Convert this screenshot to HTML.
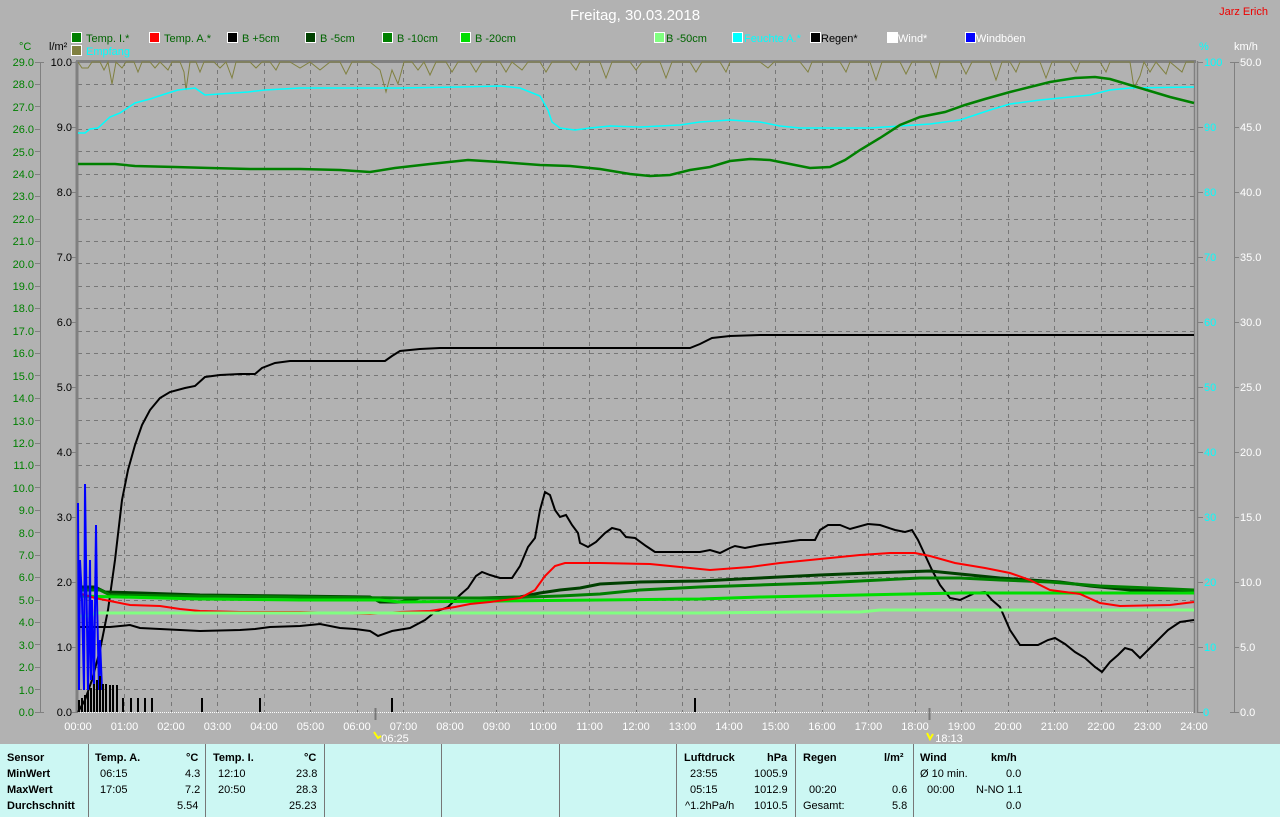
<!DOCTYPE html>
<html><head><meta charset="utf-8"><style>
body{margin:0;width:1280px;height:817px;overflow:hidden;background:#b2b2b2;font-family:"Liberation Sans",sans-serif}
svg{position:absolute;left:0;top:0}
.tbl{position:absolute;left:0;top:744px;width:1280px;height:73px;background:#ccf7f3;font-size:11px;color:#000}
.col{position:absolute;top:0;height:73px;border-right:1px solid #777}
.r{position:absolute;white-space:nowrap}
.b{font-weight:bold}
</style></head><body>
<svg width="1280" height="744" viewBox="0 0 1280 744" font-family="Liberation Sans, sans-serif">
<rect x="0" y="0" width="1280" height="744" fill="#b2b2b2"/>
<text x="635" y="20" fill="#fff" font-size="15" text-anchor="middle">Freitag, 30.03.2018</text>
<text x="1268" y="15" fill="#e00" font-size="11" text-anchor="end">Jarz Erich</text>
<!-- legend -->
<g font-size="11">
<rect x="71.5" y="32.5" width="10" height="10" fill="#008000" stroke="#fff"/><text x="86" y="42" fill="#006400">Temp. I.*</text>
<rect x="149.5" y="32.5" width="10" height="10" fill="#f00" stroke="#fff"/><text x="164" y="42" fill="#006400">Temp. A.*</text>
<rect x="227.5" y="32.5" width="10" height="10" fill="#000" stroke="#fff"/><text x="242" y="42" fill="#006400">B +5cm</text>
<rect x="305.5" y="32.5" width="10" height="10" fill="#004000" stroke="#fff"/><text x="320" y="42" fill="#006400">B -5cm</text>
<rect x="382.5" y="32.5" width="10" height="10" fill="#008000" stroke="#fff"/><text x="397" y="42" fill="#006400">B -10cm</text>
<rect x="460.5" y="32.5" width="10" height="10" fill="#00dd00" stroke="#fff"/><text x="475" y="42" fill="#006400">B -20cm</text>
<rect x="654.5" y="32.5" width="10" height="10" fill="#80ff80" stroke="#fff"/><text x="666" y="42" fill="#006400">B -50cm</text>
<rect x="732.5" y="32.5" width="10" height="10" fill="#00ffff" stroke="#fff"/><text x="744" y="42" fill="#00ffff">Feuchte A.*</text>
<rect x="810.5" y="32.5" width="10" height="10" fill="#000" stroke="#fff"/><text x="821" y="42" fill="#000">Regen*</text>
<rect x="887.5" y="32.5" width="10" height="10" fill="#fff" stroke="#fff"/><text x="898" y="42" fill="#fff">Wind*</text>
<rect x="965.5" y="32.5" width="10" height="10" fill="#00f" stroke="#fff"/><text x="976" y="42" fill="#fff">Windböen</text>
<rect x="71.5" y="45.5" width="10" height="10" fill="#808040" stroke="#fff"/><text x="86" y="55" fill="#00ffff">Empfang</text>
</g>
<text x="19" y="50" fill="#008000" font-size="11">°C</text>
<text x="49" y="50" fill="#000" font-size="11">l/m²</text>
<text x="1199" y="50" fill="#00ffff" font-size="11">%</text>
<text x="1234" y="50" fill="#fff" font-size="11">km/h</text>
<!-- grid -->
<g stroke="#777" stroke-dasharray="4,4" stroke-width="1">
<path d="M78 84.5H1194M78 106.5H1194M78 129.5H1194M78 151.5H1194M78 174.5H1194M78 196.5H1194M78 219.5H1194M78 241.5H1194M78 263.5H1194M78 286.5H1194M78 308.5H1194M78 331.5H1194M78 353.5H1194M78 375.5H1194M78 398.5H1194M78 420.5H1194M78 443.5H1194M78 465.5H1194M78 487.5H1194M78 510.5H1194M78 532.5H1194M78 555.5H1194M78 577.5H1194M78 600.5H1194M78 622.5H1194M78 644.5H1194M78 667.5H1194M78 689.5H1194"/>
<path d="M124.5 62V712M171.5 62V712M217.5 62V712M264.5 62V712M310.5 62V712M357.5 62V712M403.5 62V712M450.5 62V712M496.5 62V712M543.5 62V712M589.5 62V712M636.5 62V712M682.5 62V712M729.5 62V712M775.5 62V712M822.5 62V712M868.5 62V712M915.5 62V712M961.5 62V712M1008.5 62V712M1054.5 62V712M1101.5 62V712M1147.5 62V712"/>
</g>
<!-- axes -->
<path d="M77 61V713" stroke="#808080" stroke-width="3"/>
<path d="M76 61.5H1196" stroke="#808080" stroke-width="3"/>
<path d="M1194.5 61V713M1197.5 61V713" stroke="#808080" stroke-width="1.5"/>
<path d="M78 712.5H1194" stroke="#fff" stroke-dasharray="1,1"/>
<path d="M40.5 62V712M1234.5 62V712" stroke="#808080"/>
<g stroke="#808080"><path d="M35 62.5h9M35 84.5h5M35 106.5h5M35 129.5h5M35 151.5h5M35 174.5h5M35 196.5h5M35 219.5h5M35 241.5h5M35 263.5h5M35 286.5h5M35 308.5h5M35 331.5h5M35 353.5h5M35 375.5h5M35 398.5h5M35 420.5h5M35 443.5h5M35 465.5h5M35 487.5h5M35 510.5h5M35 532.5h5M35 555.5h5M35 577.5h5M35 600.5h5M35 622.5h5M35 644.5h5M35 667.5h5M35 689.5h5M35 712.5h9"/>
<path d="M72 62.5h5M72 127.5h5M72 192.5h5M72 257.5h5M72 322.5h5M72 387.5h5M72 452.5h5M72 517.5h5M72 582.5h5M72 647.5h5M72 712.5h5"/>
<path d="M1198 62.5h5M1198 127.5h5M1198 192.5h5M1198 257.5h5M1198 322.5h5M1198 387.5h5M1198 452.5h5M1198 517.5h5M1198 582.5h5M1198 647.5h5M1198 712.5h5"/>
<path d="M1230 62.5h9M1234 127.5h5M1234 192.5h5M1234 257.5h5M1234 322.5h5M1234 387.5h5M1234 452.5h5M1234 517.5h5M1234 582.5h5M1234 647.5h5M1230 712.5h9"/></g>
<g fill="#008000" font-size="11" text-anchor="end">
<text x="34" y="66">29.0</text><text x="34" y="88">28.0</text><text x="34" y="111">27.0</text><text x="34" y="133">26.0</text><text x="34" y="156">25.0</text><text x="34" y="178">24.0</text><text x="34" y="200">23.0</text><text x="34" y="223">22.0</text><text x="34" y="245">21.0</text><text x="34" y="268">20.0</text><text x="34" y="290">19.0</text><text x="34" y="312">18.0</text><text x="34" y="335">17.0</text><text x="34" y="357">16.0</text><text x="34" y="380">15.0</text><text x="34" y="402">14.0</text><text x="34" y="425">13.0</text><text x="34" y="447">12.0</text><text x="34" y="469">11.0</text><text x="34" y="492">10.0</text><text x="34" y="514">9.0</text><text x="34" y="537">8.0</text><text x="34" y="559">7.0</text><text x="34" y="581">6.0</text><text x="34" y="604">5.0</text><text x="34" y="626">4.0</text><text x="34" y="649">3.0</text><text x="34" y="671">2.0</text><text x="34" y="694">1.0</text><text x="34" y="716">0.0</text>
</g>
<g fill="#000" font-size="11" text-anchor="end">
<text x="72" y="66">10.0</text><text x="72" y="131">9.0</text><text x="72" y="196">8.0</text><text x="72" y="261">7.0</text><text x="72" y="326">6.0</text><text x="72" y="391">5.0</text><text x="72" y="456">4.0</text><text x="72" y="521">3.0</text><text x="72" y="586">2.0</text><text x="72" y="651">1.0</text><text x="72" y="716">0.0</text>
</g>
<g fill="#00ffff" font-size="11">
<text x="1204" y="66">100</text><text x="1204" y="131">90</text><text x="1204" y="196">80</text><text x="1204" y="261">70</text><text x="1204" y="326">60</text><text x="1204" y="391">50</text><text x="1204" y="456">40</text><text x="1204" y="521">30</text><text x="1204" y="586">20</text><text x="1204" y="651">10</text><text x="1203" y="716">0</text>
</g>
<g fill="#fff" font-size="11">
<text x="1240" y="66">50.0</text><text x="1240" y="131">45.0</text><text x="1240" y="196">40.0</text><text x="1240" y="261">35.0</text><text x="1240" y="326">30.0</text><text x="1240" y="391">25.0</text><text x="1240" y="456">20.0</text><text x="1240" y="521">15.0</text><text x="1240" y="586">10.0</text><text x="1240" y="651">5.0</text><text x="1240" y="716">0.0</text>
</g>
<g fill="#fff" font-size="11" text-anchor="middle">
<text x="78" y="730">00:00</text><text x="124.5" y="730">01:00</text><text x="171" y="730">02:00</text><text x="217.5" y="730">03:00</text><text x="264" y="730">04:00</text><text x="310.5" y="730">05:00</text><text x="357" y="730">06:00</text><text x="403.5" y="730">07:00</text><text x="450" y="730">08:00</text><text x="496.5" y="730">09:00</text><text x="543" y="730">10:00</text><text x="589.5" y="730">11:00</text><text x="636" y="730">12:00</text><text x="682.5" y="730">13:00</text><text x="729" y="730">14:00</text><text x="775.5" y="730">15:00</text><text x="822" y="730">16:00</text><text x="868.5" y="730">17:00</text><text x="915" y="730">18:00</text><text x="961.5" y="730">19:00</text><text x="1008" y="730">20:00</text><text x="1054.5" y="730">21:00</text><text x="1101" y="730">22:00</text><text x="1147.5" y="730">23:00</text><text x="1194" y="730">24:00</text>
<text x="395" y="742">06:25</text><text x="949" y="742">18:13</text>
</g>
<path d="M374 732l4 6 3-2" stroke="#ff0" stroke-width="2" fill="none"/>
<path d="M927 733l3 6 3-5" stroke="#ff0" stroke-width="2" fill="none"/>
<path d="M375.5 708V720M929.5 708V720" stroke="#777" stroke-width="2"/>
<!-- empfang -->
<polyline fill="none" stroke="#808040" stroke-width="1" points="78,62 82,68 88,68 92,62 100,62 104,70 108,62 112,84 116,62 122,68 126,62 134,62 138,72 142,62 150,62 155,68 160,62 168,70 172,62 180,62 184,72 186,90 190,62 196,62 200,72 204,62 214,62 220,68 226,62 232,78 236,62 250,62 256,68 262,62 270,62 276,70 280,62 290,62 300,68 310,62 320,70 330,62 340,62 346,74 352,62 370,62 380,70 386,92 392,70 398,84 404,62 412,62 418,70 424,62 430,75 436,62 446,62 452,72 458,62 470,62 476,72 482,62 500,62 506,72 512,62 522,70 528,62 540,62 546,72 552,62 570,62 576,70 580,62 600,62 606,78 612,62 630,62 636,70 642,62 660,62 666,78 672,62 690,62 696,72 702,62 720,62 726,72 730,62 760,62 768,68 774,62 800,62 808,72 812,62 840,62 846,72 850,62 870,62 876,80 882,62 900,62 906,74 912,62 930,62 936,78 940,62 960,62 966,74 972,62 990,62 996,80 1002,62 1010,62 1016,72 1020,62 1040,62 1046,78 1052,62 1070,62 1076,72 1080,62 1100,62 1106,72 1110,62 1130,62 1134,88 1140,76 1144,62 1150,72 1156,62 1166,74 1170,62 1182,72 1186,62 1194,62"/>
<!-- humidity -->
<polyline fill="none" stroke="#00ffff" stroke-width="1.5" points="78,133 85,133 90,129 98,128 110,117 120,113 135,103 150,99 165,94 178,90 195,88 205,95 248,92 265,90 300,88 350,88 400,88 460,87 500,86 520,88 540,96 548,110 552,122 560,128 575,130 590,128 610,126 640,127 660,126 680,125 700,122 730,120 760,122 780,126 800,128 840,128 870,128 900,126 930,124 960,120 990,110 1010,104 1040,100 1070,97 1090,95 1110,90 1130,88 1194,87"/>
<!-- temp I -->
<polyline fill="none" stroke="#008000" stroke-width="2.5" points="78,164 115,164 135,166 175,167 210,168 250,169 300,169 340,170 370,172 395,168 430,164 468,160 500,162 540,165 570,166 600,169 630,174 650,176 670,175 690,170 710,167 730,161 750,159 770,160 790,164 810,168 830,167 845,160 860,150 880,138 900,125 920,117 945,112 965,105 985,99 1010,92 1030,87 1050,82 1075,78 1095,77 1110,79 1130,85 1150,91 1170,97 1194,103"/>
<!-- B +5 black rising -->
<polyline fill="none" stroke="#000" stroke-width="2" points="78,712 85,700 92,680 100,650 108,610 115,560 122,500 128,470 135,445 142,425 150,410 160,398 170,392 185,388 195,386 205,377 220,375 240,374 255,374 262,368 275,363 290,361 330,361 385,361 392,356 400,351 420,349 440,348 480,348 560,348 640,348 690,348 700,344 712,338 730,336 760,335 900,335 1194,335"/>
<!-- black temp-like -->
<polyline fill="none" stroke="#000" stroke-width="2" points="78,627 110,627 130,625 140,628 160,629 200,631 240,630 255,629 270,627 300,626 320,624 340,628 355,629 370,631 378,636 392,631 410,628 425,620 435,612 448,607 460,595 468,588 476,576 482,572 490,575 500,578 512,578 520,566 528,547 535,538 540,510 545,492 550,495 555,510 560,517 566,515 572,525 578,533 580,543 588,547 596,542 605,533 612,528 620,530 626,537 635,538 646,546 655,552 700,552 710,550 720,553 730,548 735,546 745,548 760,545 785,542 800,540 815,540 820,530 828,525 840,525 850,529 868,524 880,525 895,530 905,532 912,530 918,540 925,555 932,570 940,585 950,598 960,600 975,593 985,592 992,600 1000,607 1010,630 1020,645 1038,645 1048,640 1055,638 1065,644 1075,652 1085,658 1095,667 1102,672 1110,662 1118,655 1125,648 1132,650 1140,658 1148,650 1158,640 1168,630 1180,622 1194,620"/>
<!-- B -5 dark green -->
<polyline fill="none" stroke="#004000" stroke-width="3" points="78,587 95,587 105,592 140,593 200,595 290,596 370,597 380,602 400,602 420,598 480,598 520,597 540,593 560,590 580,588 600,584 640,582 700,581 760,578 820,575 870,573 930,571 960,574 1000,578 1030,580 1060,582 1090,586 1130,590 1194,592"/>
<!-- B -10 green -->
<polyline fill="none" stroke="#008000" stroke-width="3" points="78,590 100,590 110,595 180,596 300,597 400,598 500,598 560,596 600,594 640,590 700,587 760,585 820,583 880,580 920,578 960,578 1000,580 1050,582 1100,586 1150,588 1194,590"/>
<!-- B -20 bright -->
<polyline fill="none" stroke="#00dd00" stroke-width="3" points="78,596 120,597 200,599 300,600 380,600 400,602 500,601 600,600 700,599 760,597 860,595 960,593 1100,593 1194,593"/>
<!-- red temp A -->
<polyline fill="none" stroke="#f00" stroke-width="2" points="78,593 95,598 115,602 130,605 160,606 180,609 200,611 240,612 300,612 370,614 400,612 430,611 455,607 470,604 490,602 520,598 535,590 545,576 555,566 565,563 600,563 650,564 690,568 710,570 750,567 780,563 820,559 860,555 890,553 915,553 930,556 955,563 985,568 1010,573 1030,580 1050,590 1080,594 1100,603 1120,606 1170,605 1194,602"/>
<!-- B -50 light -->
<polyline fill="none" stroke="#80ff80" stroke-width="3" points="78,616 90,616 96,613 200,613 400,613 500,613 600,613 700,613 800,612 860,612 880,610 1000,610 1194,610"/>
<!-- windböen -->
<polyline fill="none" stroke="#00f" stroke-width="2" points="78,503 79,690 80,560 82,600 84,690 85,484 86,560 88,690 89,640 90,560 91,680 92,600 94,690 96,525 97,600 99,690 100,640 102,690"/>
<!-- rain bars -->
<g fill="#000">
<rect x="78" y="700" width="2" height="12"/><rect x="81" y="698" width="2" height="14"/><rect x="84" y="695" width="2" height="17"/><rect x="87" y="692" width="2" height="20"/><rect x="90" y="688" width="2" height="24"/><rect x="93" y="684" width="2" height="28"/><rect x="96" y="680" width="2" height="32"/><rect x="99" y="676" width="2" height="36"/><rect x="102" y="684" width="2" height="28"/><rect x="105" y="684" width="2" height="28"/><rect x="109" y="685" width="2" height="27"/><rect x="112" y="685" width="2" height="27"/><rect x="116" y="685" width="2" height="27"/><rect x="122" y="698" width="2" height="14"/><rect x="130" y="698" width="2" height="14"/><rect x="137" y="698" width="2" height="14"/><rect x="144" y="698" width="2" height="14"/><rect x="151" y="698" width="2" height="14"/><rect x="201" y="698" width="2" height="14"/><rect x="259" y="698" width="2" height="14"/><rect x="391" y="698" width="2" height="14"/><rect x="694" y="698" width="2" height="14"/>
</g>
</svg>
<div class="tbl">
<div class="col" style="left:0;width:88px"></div>
<div class="col" style="left:88px;width:117px"></div>
<div class="col" style="left:205px;width:119px"></div>
<div class="col" style="left:324px;width:117px"></div>
<div class="col" style="left:441px;width:118px"></div>
<div class="col" style="left:559px;width:117px"></div>
<div class="col" style="left:676px;width:119px"></div>
<div class="col" style="left:795px;width:118px"></div>
<div class="r b" style="left:7px;top:8px">Sensor</div>
<div class="r b" style="left:7px;top:24px">MinWert</div>
<div class="r b" style="left:7px;top:40px">MaxWert</div>
<div class="r b" style="left:7px;top:56px">Durchschnitt</div>
<div class="r b" style="left:95px;top:8px">Temp. A.</div><div class="r b" style="left:186px;top:8px">°C</div>
<div class="r" style="left:100px;top:24px">06:15</div><div class="r" style="left:185px;top:24px">4.3</div>
<div class="r" style="left:100px;top:40px">17:05</div><div class="r" style="left:185px;top:40px">7.2</div>
<div class="r" style="left:177px;top:56px">5.54</div>
<div class="r b" style="left:213px;top:8px">Temp. I.</div><div class="r b" style="left:304px;top:8px">°C</div>
<div class="r" style="left:218px;top:24px">12:10</div><div class="r" style="left:296px;top:24px">23.8</div>
<div class="r" style="left:218px;top:40px">20:50</div><div class="r" style="left:296px;top:40px">28.3</div>
<div class="r" style="left:289px;top:56px">25.23</div>
<div class="r b" style="left:684px;top:8px">Luftdruck</div><div class="r b" style="left:767px;top:8px">hPa</div>
<div class="r" style="left:690px;top:24px">23:55</div><div class="r" style="left:754px;top:24px">1005.9</div>
<div class="r" style="left:690px;top:40px">05:15</div><div class="r" style="left:754px;top:40px">1012.9</div>
<div class="r" style="left:685px;top:56px">^1.2hPa/h</div><div class="r" style="left:754px;top:56px">1010.5</div>
<div class="r b" style="left:803px;top:8px">Regen</div><div class="r b" style="left:884px;top:8px">l/m²</div>
<div class="r" style="left:809px;top:40px">00:20</div><div class="r" style="left:892px;top:40px">0.6</div>
<div class="r" style="left:803px;top:56px">Gesamt:</div><div class="r" style="left:892px;top:56px">5.8</div>
<div class="r b" style="left:920px;top:8px">Wind</div><div class="r b" style="left:991px;top:8px">km/h</div>
<div class="r" style="left:920px;top:24px">Ø 10 min.</div><div class="r" style="left:1006px;top:24px">0.0</div>
<div class="r" style="left:927px;top:40px">00:00</div><div class="r" style="left:976px;top:40px">N-NO 1.1</div>
<div class="r" style="left:1006px;top:56px">0.0</div>
</div>
</body></html>
